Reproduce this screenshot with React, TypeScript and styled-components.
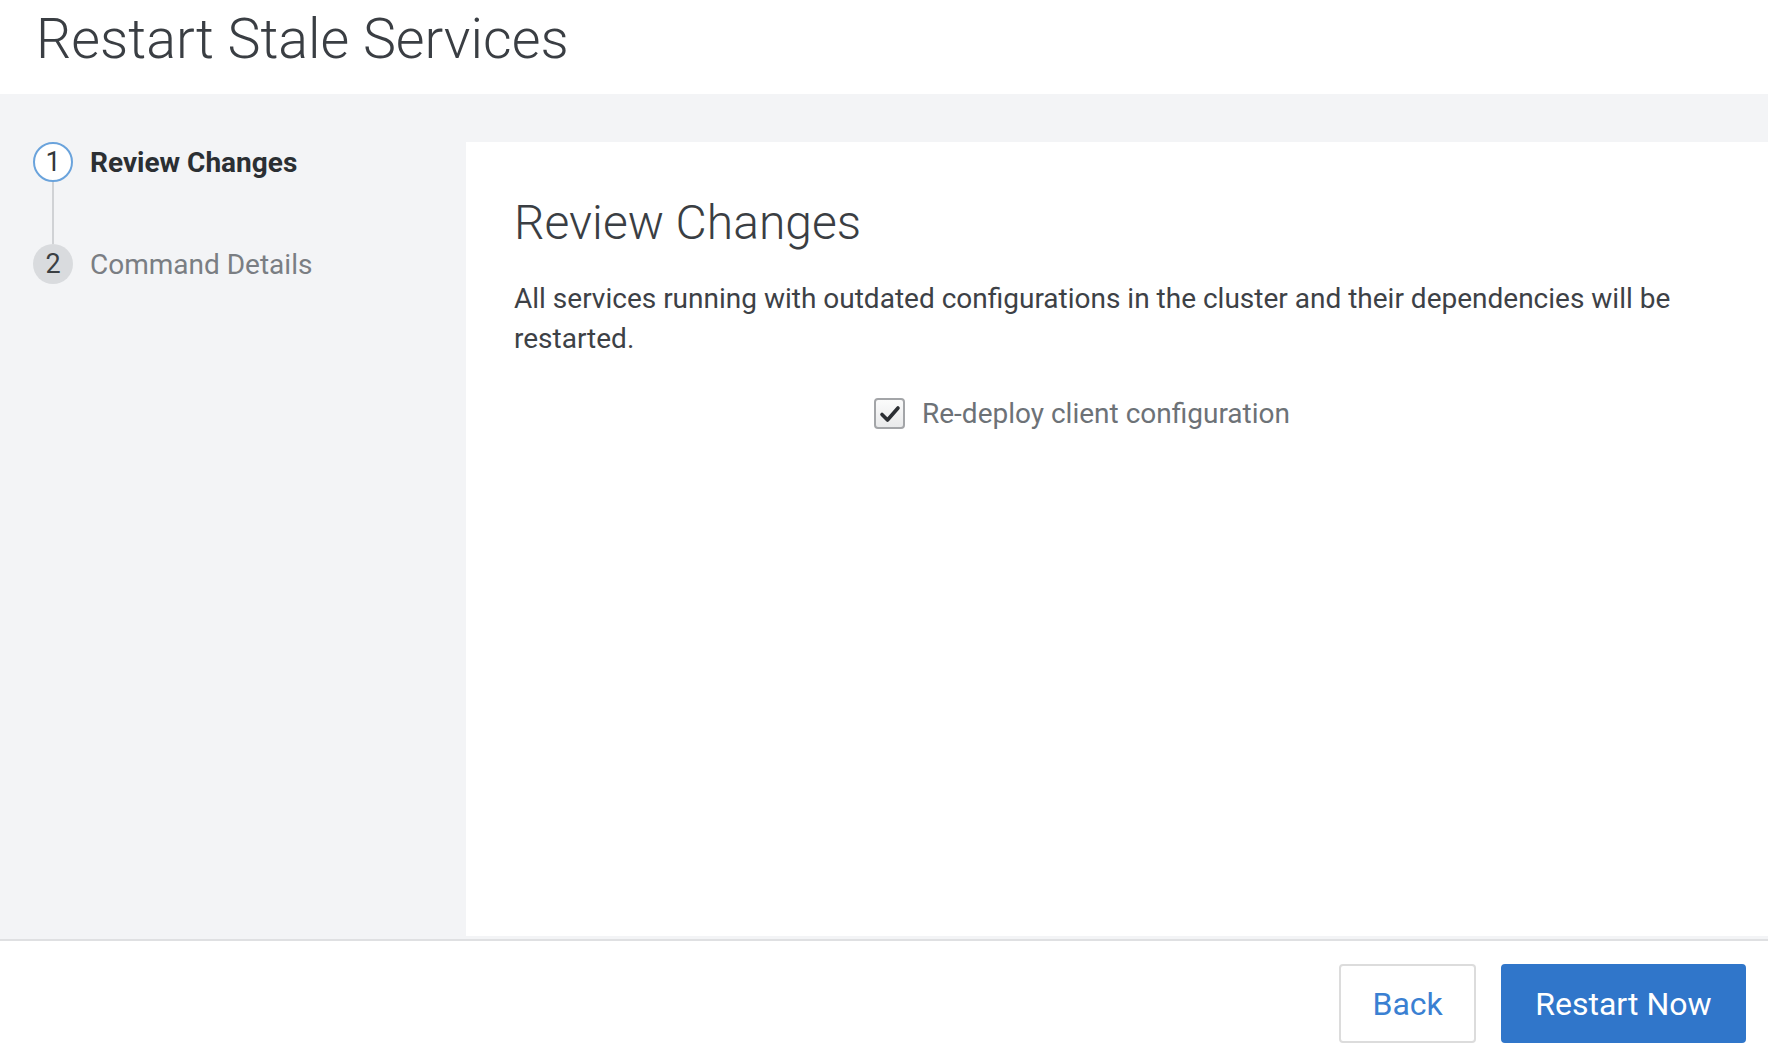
import React from "react";
import styled, { createGlobalStyle } from "styled-components";

const GlobalStyle = createGlobalStyle`
  html, body { margin: 0; padding: 0; background: #ffffff; }
  body { font-family: Roboto, "Noto Sans", "Liberation Sans", sans-serif; }
  * { box-sizing: border-box; }
`;

const Page = styled.div`
  display: flex;
  flex-direction: column;
  width: 1768px;
  height: 1060px;
  overflow: hidden;
`;

const Header = styled.header`
  height: 94px;
  flex: 0 0 94px;
  padding: 11px 0 0 36px;
  background: #ffffff;
`;

const Title = styled.h1`
  margin: 0;
  font-size: 55.6px;
  line-height: 56px;
  font-weight: 300;
  color: #3a3e43;
`;

const Body = styled.div`
  flex: 1;
  display: flex;
  background: #f3f4f6;
  padding: 48px 0 3px 0;
`;

const Sidebar = styled.nav`
  width: 466px;
  flex: 0 0 466px;
  padding-left: 33px;
  display: flex;
  flex-direction: column;
`;

const Step = styled.div`
  display: flex;
  align-items: center;
  gap: 17px;
`;

const StepCircle = styled.div<{ $active?: boolean }>`
  width: 40px;
  height: 40px;
  border-radius: 50%;
  display: flex;
  align-items: center;
  justify-content: center;
  font-size: 27px;
  color: ${(p) => (p.$active ? "#33373b" : "#3b3f43")};
  background: ${(p) => (p.$active ? "#ffffff" : "#d9dbde")};
  border: ${(p) => (p.$active ? "2px solid #6aa3dc" : "none")};
`;

const StepLabel = styled.span<{ $active?: boolean }>`
  font-size: 28px;
  font-weight: ${(p) => (p.$active ? 700 : 400)};
  color: ${(p) => (p.$active ? "#2b2f33" : "#7a7e83")};
`;

const Connector = styled.div`
  width: 2px;
  height: 62px;
  margin-left: 19px;
  background: #d0d2d5;
`;

const Panel = styled.main`
  flex: 1;
  background: #ffffff;
  padding: 55px 48px 0 48px;
`;

const Heading = styled.h2`
  margin: 0;
  font-size: 48px;
  line-height: 52px;
  font-weight: 300;
  color: #3a3e43;
`;

const Description = styled.p`
  margin: 30px 0 0 0;
  font-size: 28px;
  line-height: 40px;
  color: #3d4146;
`;

const CheckRow = styled.label`
  display: flex;
  align-items: center;
  gap: 17px;
  margin: 38px 0 0 360px;
`;

const CheckBox = styled.span`
  width: 31px;
  height: 31px;
  border: 2px solid #a3a5a8;
  border-radius: 4px;
  background: linear-gradient(#fbfbfb, #e9eaeb);
  display: flex;
  align-items: center;
  justify-content: center;
`;

const CheckLabel = styled.span`
  font-size: 28px;
  color: #6d7277;
`;

const Footer = styled.footer`
  flex: 0 0 121px;
  border-top: 2px solid #dfe0e2;
  display: flex;
  justify-content: flex-end;
  align-items: flex-start;
  gap: 25px;
  padding: 23px 22px 0 0;
  background: #ffffff;
`;

const Button = styled.button<{ $primary?: boolean }>`
  height: 79px;
  padding: 0 ${(p) => (p.$primary ? "32.5px" : "31px")};
  font-family: Roboto, "Noto Sans", "Liberation Sans", sans-serif;
  font-size: 32px;
  border-radius: 4px;
  cursor: pointer;
  color: ${(p) => (p.$primary ? "#ffffff" : "#3a80d2")};
  background: ${(p) => (p.$primary ? "#3076ca" : "#ffffff")};
  border: 2px solid ${(p) => (p.$primary ? "#3076ca" : "#dcdcdc")};
`;

export default function App() {
  return (
    <Page>
      <GlobalStyle />
      <Header>
        <Title>Restart Stale Services</Title>
      </Header>
      <Body>
        <Sidebar>
          <Step>
            <StepCircle $active>1</StepCircle>
            <StepLabel $active>Review Changes</StepLabel>
          </Step>
          <Connector />
          <Step>
            <StepCircle>2</StepCircle>
            <StepLabel>Command Details</StepLabel>
          </Step>
        </Sidebar>
        <Panel>
          <Heading>Review Changes</Heading>
          <Description>
            All services running with outdated configurations in the cluster and their dependencies will be
            restarted.
          </Description>
          <CheckRow>
            <CheckBox>
              <svg width="22" height="20" viewBox="0 0 22 20">
                <path d="M3 10.5 L8.5 16 L19 4" fill="none" stroke="#2c2f33" strokeWidth="3.6" strokeLinecap="round" strokeLinejoin="round" />
              </svg>
            </CheckBox>
            <CheckLabel>Re-deploy client configuration</CheckLabel>
          </CheckRow>
        </Panel>
      </Body>
      <Footer>
        <Button>Back</Button>
        <Button $primary>Restart Now</Button>
      </Footer>
    </Page>
  );
}
